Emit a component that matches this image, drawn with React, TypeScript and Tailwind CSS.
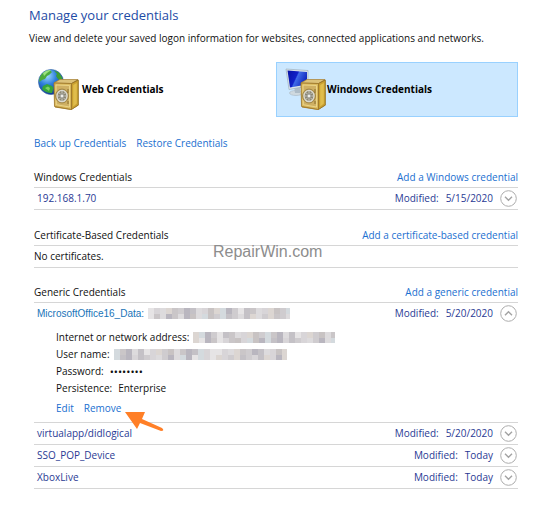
import React, { useState } from "react";

const lineClass = "border-[#d6d6d6]";

function Safe() {
  return (
    <g>
      <path d="M16 15.500L22 12.500L40 12.500L40.500 14L40.500 38.500L33 43L17 40.500Z" fill="#b08a34" />
      <path d="M16 16L22 12.500H40L33.500 16.500Z" fill="#dcc27a" stroke="#a5803a" strokeWidth=".6" />
      <path d="M33.500 16.500L40.300 13V38L33.500 42.500Z" fill="#c9a030" stroke="#8d6a22" strokeWidth=".7" />
      <path d="M35.200 18L38.800 16V36.500L35.200 39.500Z" fill="#e0bd4c" />
      <path d="M16 16L33.500 16.500V42.500L16.500 39.500Z" fill="#d9b85c" stroke="#9b7428" strokeWidth=".8" />
      <path d="M18 18L31.500 18.500V40L18.300 37.700Z" fill="#cfb063" stroke="#f0dc94" strokeWidth=".8" />
      <ellipse cx="24" cy="29" rx="6.500" ry="7" fill="#b79b58" stroke="#8a7138" strokeWidth=".6" />
      <ellipse cx="24" cy="29" rx="5" ry="5.600" fill="#8c8875" stroke="#d9d8cf" strokeWidth="1.400" />
      <path d="M24 24V34M19.500 29H28.500M21 25.500L27 32.500M27 25.500L21 32.500" stroke="#cfcfc8" strokeWidth=".9" />
      <circle cx="24" cy="29" r="2" fill="#eeeeea" stroke="#74746c" strokeWidth=".7" />
      <path d="M30 22V26M30 34V37" stroke="#8a6d2c" strokeWidth="1" />
    </g>
  );
}

function WebIcon() {
  return (
    <svg width="42" height="46" viewBox="0 0 42 46" aria-hidden="true">
      <defs>
        <radialGradient id="globe" cx=".35" cy=".25" r=".8">
          <stop offset="0" stopColor="#9fdcff" />
          <stop offset=".45" stopColor="#2f7fdc" />
          <stop offset="1" stopColor="#0b2f90" />
        </radialGradient>
      </defs>
      <circle cx="13" cy="15" r="12.500" fill="url(#globe)" stroke="#2d5c9c" strokeWidth=".6" />
      <path d="M3 8Q7 3 12 3.500L14 5L11 8L9 9L7 12L4 13L1.500 15Q.500 12 3 8Z" fill="#4cab3c" />
      <path d="M16 3.500L21 5.500L24.500 11L23.500 14L20 12L18 9L19 7Z" fill="#3d9d35" />
      <path d="M5 19L9 17L14 19L15.500 21L14 26Q8 26.500 4 22Z" fill="#35a53b" />
      <path d="M7 21L10 19.500L12 21L11 24Z" fill="#7bd363" />
      <path d="M5 6Q9 2.500 13 3.200L9 6L6 9Z" fill="#9ae27f" />
      <Safe />
    </svg>
  );
}

function WindowsIcon() {
  return (
    <svg width="42" height="46" viewBox="0 0 42 46" aria-hidden="true">
      <defs>
        <linearGradient id="screen" x2="1" y2=".4">
          <stop offset="0" stopColor="#0713a3" />
          <stop offset=".5" stopColor="#1020c8" />
          <stop offset=".56" stopColor="#3f6be8" />
          <stop offset="1" stopColor="#1228be" />
        </linearGradient>
      </defs>
      <ellipse cx="11" cy="26" rx="6.500" ry="2.500" fill="#cfd9df" stroke="#a9b7c1" strokeWidth=".6" />
      <path d="M9 19L15 18L15 26H10Z" fill="#aebcc7" />
      <path d="M1 2L23 3.500V19L4 22.500Z" fill="#dce5ea" stroke="#9eb0bf" strokeWidth=".7" />
      <path d="M2.500 3.500L22 5V17.500L5 20.500Z" fill="url(#screen)" />
      <Safe />
    </svg>
  );
}

function Toggle({ open, label, onClick }: { open: boolean; label: string; onClick: () => void }) {
  return (
    <button type="button" aria-label={label} aria-expanded={open} onClick={onClick} className="ml-[7px] mr-px">
      <svg width="17" height="17" viewBox="0 0 17 17" fill="none" className="block">
        <circle cx="8.500" cy="8.500" r="7.800" fill="#fff" stroke="#adadad" />
        <path d={open ? "M5 10.300L8.500 6.800L12 10.300" : "M5 6.800L8.500 10.300L12 6.800"} stroke="#a3a3a3" strokeWidth="1.400" />
      </svg>
    </button>
  );
}

const shades = ["#dddbdd", "#cfcccf", "#c4c1c6", "#dcd6d2", "#b9b6bf", "#e6e4e5", "#cac6c8", "#d4dade", "#d8d5d8", "#c8c3c3"];
const pattern = "5803614208937415260839176402583190642785";

function Redacted({ width, offset }: { width: number; offset: number }) {
  const cols = Math.ceil(width / 6);
  return (
    <svg width={width} height="11" role="img" aria-label="Hidden value" className="block">
      {Array.from({ length: cols * 2 }, (_, i) => {
        const col = i % cols;
        const row = Math.floor(i / cols);
        const shade = Number(pattern[(col + offset + row * 3 * (col % 2)) % pattern.length]);
        return <rect key={i} x={col * 6} y={row * 6} width="6" height="6" fill={shades[shade]} />;
      })}
    </svg>
  );
}

function Section({ title, action, className, children }: { title: string; action: string; className: string; children: React.ReactNode }) {
  return (
    <section className={className}>
      <div className={`flex h-5 items-center justify-between border-b ${lineClass}`}>
        <h2>{title}</h2>
        <a href="#add" className="text-[#1a6fd0]">{action}</a>
      </div>
      {children}
    </section>
  );
}

function Row({ name, modified, children }: { name: React.ReactNode; modified: string; children?: React.ReactNode }) {
  const [open, setOpen] = useState(Boolean(children));
  return (
    <div className={`border-b ${lineClass}`}>
      <div className="flex h-[21px] items-center pl-[3px] text-[#2a3a94]">
        <span className="flex items-center gap-1">{name}</span>
        <span className="ml-auto">Modified:</span>
        <span className="ml-[7px]">{modified}</span>
        <Toggle open={open} label="Show details" onClick={() => setOpen(!open)} />
      </div>
      {open && children}
    </div>
  );
}

export default function App() {
  return (
    <main className="min-h-screen bg-white pb-4 pl-[34px] pr-[19px] pt-[5px] font-['Open_Sans','Noto_Sans',sans-serif] text-[10px] leading-[17px] text-[#101010]">
      <header className="-ml-[5px]">
        <h1 className="text-[13px] leading-5 text-[#1d4ba5]">Manage your credentials</h1>
        <p className="mt-[5px] whitespace-nowrap">View and delete your saved logon information for websites, connected applications and networks.</p>
      </header>

      <div className="mt-[15px] grid grid-cols-2 text-black">
        <button type="button" className="flex h-[55px] items-center pl-1 text-left font-bold">
          <WebIcon />
          <span className="ml-[2px]">Web Credentials</span>
        </button>
        <button type="button" aria-pressed="true" className="flex h-[55px] items-center border border-[#99d1ff] bg-[#cce8ff] pl-2 text-left font-bold">
          <WindowsIcon />
          <span>Windows Credentials</span>
        </button>
      </div>

      <nav className="mt-[18px] flex gap-[10px] text-[#1a6fd0]">
        <a href="#backup">Back up Credentials</a>
        <a href="#restore">Restore Credentials</a>
      </nav>

      <Section title="Windows Credentials" action="Add a Windows credential" className="mt-4">
        <Row name="192.168.1.70" modified="5/15/2020" />
      </Section>

      <Section title="Certificate-Based Credentials" action="Add a certificate-based credential" className="relative mt-4">
        <p className={`flex h-[22px] items-center border-b ${lineClass}`}>No certificates.</p>
        <span className="absolute left-[179px] top-4 font-['Liberation_Sans',sans-serif] text-[16px] leading-5 text-[#8d8d8d]">RepairWin.com</span>
      </Section>

      <Section title="Generic Credentials" action="Add a generic credential" className="mt-[15px]">
        <Row
          modified="5/20/2020"
          name={
            <>
              <span className="font-['Liberation_Sans',sans-serif] text-[#1874b8]">MicrosoftOffice16_Data:</span>
              <Redacted width={142} offset={0} />
            </>
          }
        >
          <div className="relative pb-[5px] pl-[22px] pt-[5px]">
            <dl>
              <div className="flex items-center gap-1"><dt>Internet or network address:</dt><dd><Redacted width={142} offset={11} /></dd></div>
              <div className="flex items-center gap-1"><dt>User name:</dt><dd><Redacted width={173} offset={23} /></dd></div>
              <div className="flex items-center gap-[6px]"><dt>Password:</dt><dd className="text-[11px]">••••••••</dd></div>
              <div className="flex items-center gap-[6px]"><dt>Persistence:</dt><dd>Enterprise</dd></div>
            </dl>
            <div className="mt-[3px] flex gap-[10px] text-[#1a6fd0]">
              <a href="#edit">Edit</a>
              <a href="#remove">Remove</a>
            </div>
            <svg width="40" height="22" viewBox="0 0 40 22" className="absolute -bottom-[11px] left-[91px]" aria-hidden="true">
              <path d="M0 1L20 1L17 8L37 17Q40 20 36 20L15 12L12 18Z" fill="#ff7f27" />
            </svg>
          </div>
        </Row>
        <Row name="virtualapp/didlogical" modified="5/20/2020" />
        <Row name="SSO_POP_Device" modified="Today" />
        <Row name="XboxLive" modified="Today" />
      </Section>
    </main>
  );
}
